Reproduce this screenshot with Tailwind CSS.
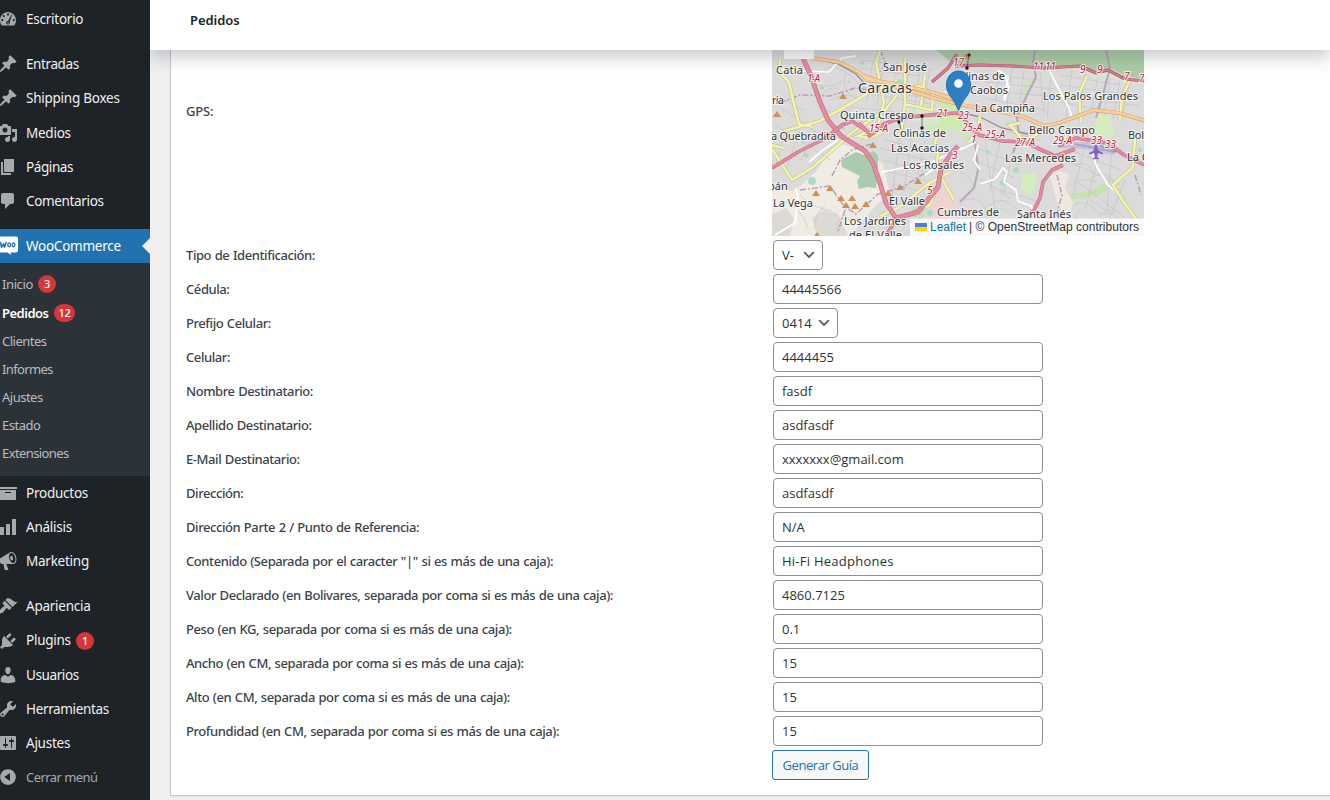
<!DOCTYPE html>
<html lang="es">
<head>
<meta charset="utf-8">
<title>Pedidos</title>
<script src="https://cdn.jsdelivr.net/npm/@tailwindcss/browser@4"></script>
</head>
<body class="w-[1330px] h-[800px] overflow-hidden bg-[#f0f0f1] font-['Noto_Sans','Open_Sans',sans-serif] text-[13px] text-[#3c434a] flex">

<aside class="relative z-20 w-[150px] h-[800px] shrink-0 bg-[#1d2327] text-[#f0f0f1] text-[13.5px] tracking-[-0.25px] pt-[2px] overflow-hidden" id="menu"></aside>

<div class="flex-1 min-w-0 h-[800px] flex flex-col">
  <header class="relative z-10 h-[50px] shrink-0 bg-white shadow-[0_8px_16px_0_rgba(85,93,102,0.3)] flex items-center px-10 pb-[9px]">
    <h1 class="text-[13px] leading-[19px] font-semibold text-[#1d2327] tracking-[-0.05px]">Pedidos</h1>
  </header>
  <main class="ml-5 h-[746px] shrink-0 bg-white border-l border-b border-[#c3c4c7] shadow-[0_1px_1px_rgba(0,0,0,0.04)] pl-[15px]">
    <div class="flex h-[188px]">
      <div class="w-[586px] pt-[52px] font-medium tracking-[-0.2px] leading-[18px]">GPS:</div>
      <svg class="block w-[372px] h-[186px]" viewBox="772 50 372 186" font-family="Noto Sans, sans-serif">
        <rect x="772" y="50" width="372" height="186" fill="#dcdbdb"/>
        <!-- hills and parks -->
        <path d="M772 188l20 3 10-6 14-14 15-22 10-5 26 8 16 12 7 30-15 12-18 22-12 12h-73z" fill="#f0ebe3"/>
        <path d="M772 214l14-6 8 10-4 18h-18zM812 218l12-8 14 4 10 22h-30z" fill="#dddad6"/>
        <path d="M841 160l15-8 8 3 9-4 5 4 0 17-2 16-9-1-8 2-2-8 3-5-18-9z" fill="#abcbb0"/>
        <path d="M936 50h208v29l-18-3-16-8-12 5-18-8-38 2-42-3-28 1-12-1-12-4z" fill="#abcba3"/>
        <path d="M1020 65l45 1 16 1 16 7 13-2 14 7 20 2v3l-21-1-14-8-14 3-16-8-58-1z" fill="#d9e8ce"/>
        <path d="M941 112l16-6 14 15-4 18-14-11-22 8-7-14z" fill="#cdebb0"/>
        <path d="M937 96l24 4 3 18-20-2z" fill="#cdebb0"/>
        <path d="M904 103l20 3 17 14-5 6-27-6z" fill="#d5e9d0"/>
        <path d="M1095 114l15 2 4 20-18 3z" fill="#d4edbd"/>
        <path d="M1021 175l13-3 3 10-7 14-8-6z" fill="#d4edbd"/>
        <path d="M1067 194l25-3 10-7 10 3-15 9-26 3z" fill="#c5e3ad"/>
        <path d="M934 190l12-1 8 8 8 18-14 15-28 5z" fill="#eed3d3"/>
        <path d="M1050 176l10-5 9 3-4 14 8 14-4 16-11-12z" fill="#efe7e2"/>
        <path d="M914 204l17-5-8 20-15 4z" fill="#c5dfc4"/>
        <path d="M1027 81l6-3-8 17 3 1-6 16 4-19-4 1z" fill="#c8e7ae"/>
        <!-- street mesh -->
        <g fill="none" stroke="#c4c3c5" stroke-width=".7">
          <path d="M862 60l70 10M860 68l60 8M862 87l70 12M866 93l70 12M850 107l90 10M873 60l-6 40M885 60l-8 45M897 62l-8 50M910 64l-8 48M920 70l-7 46M930 70l-8 40M990 75l50 5M985 82l70 7M980 90l90 8M985 98l60 12M1060 75l60 10M1060 85l80 12M1060 94l80 12M1060 102l60 12M1000 68l-5 38M1012 68l-6 45M1024 72l-6 42M1040 70l4 45M1052 68l-5 50M1072 68l-6 52M1086 70l-8 50M1098 76l-7 38M1110 78l-6 38M1120 80l-7 38M1130 82l-9 38"/>
          <path d="M885 140l60 15M880 148l60 16M883 160l50 14M888 172l45 10M892 184l30 8M900 136l-8 60M912 132l-8 60M925 140l-9 44M775 95l30 16M780 108l30 18M775 125l30 18M800 140l30 20M784 135l-8 30M800 130l-14 40M815 130l-14 30M1000 130l40 10M970 145l50 20M975 160l40 18M980 178l30 20M1000 190l40 12M985 140l10 70M1000 140l-10 50M1015 144l-12 50M1070 150l50 20M1065 160l55 25M1075 180l40 30M1085 145l-12 50M1100 150l-15 60M1112 150l-5 60M1125 180l-20 50M1090 200l40 25"/>
          <path d="M820 75q8-12 20-6t18 14M818 85q14 4 24-4M830 100q14-8 28-2M822 95q8-10 16-6M845 75q-4 14 8 22M826 110q10 6 26-2M780 200q20 4 28 28M800 195q10 12 32 16M825 205q-12 12-10 25M845 215q-10 6-8 18M965 200q18-6 22 16M990 205q14-12 28 6M1090 180q14-14 26 4M1100 215q14-12 26 4M1075 165q12-6 18 8M1080 210q-10 8 4 14M960 172q12 4 14 16"/>
        </g>
        <g fill="none" stroke="#bfdab2" stroke-width="1"><path d="M1074 205q12-6 20 4t24 2M1070 186q14-10 26-4M985 215q10-10 22-4M1112 185q12 4 14 18M1084 222q12-6 20 0"/></g>
        <g fill="#a9dcc0">
          <circle cx="822" cy="88" r="2"/><circle cx="806" cy="155" r="2.500"/><circle cx="812" cy="181" r="4"/><circle cx="862" cy="63" r="2"/><circle cx="843" cy="128" r="2"/><circle cx="1003" cy="183" r="3"/><circle cx="1016" cy="170" r="3"/><circle cx="900" cy="82" r="3"/><circle cx="930" cy="213" r="3"/><circle cx="1140" cy="150" r="2"/><circle cx="849" cy="82" r="1.500"/><circle cx="988" cy="152" r="2"/>
        </g>
        <path d="M1060 143l45-2 14 8-6 6-28-6-25-1z" fill="#c8c2d6"/>
        <path d="M1075 144l40 8" stroke="#a9a6c9" stroke-width="2"/>
        <!-- district limits -->
        <g fill="none" stroke="#a787ad" stroke-width="1.500" stroke-dasharray="6 2 2 2" opacity=".75">
          <path d="M780 103l20-8 30 1 25-8 20 3M832 176l8-16 12-10 20-6M800 190l30-4 14 20 12 8 22-20 25-7 22-14M845 210l-7 22M1057 175l5 20-6 22M880 50l6 14-10 12M1100 146l40 14M1135 175l6 20"/>
        </g>
        <path d="M1035 50l-2 12 3 15-10 20-9 20 2 20-6 16M1106 50l4 18-8 30-6 20M975 140l3 30-4 18-14 14" fill="none" stroke="#ab93b0" stroke-width="2" opacity=".75"/>
        <g fill="none" stroke="#92899b" stroke-width="1.300"><path d="M813 58l25 6 18 10 8 9M960 112l20 5 22 11 26 6"/></g>
        <!-- minor roads -->
        <g fill="none" stroke="#fff" stroke-width="1.700">
          <path d="M776 69l25 2 28 1 13-14 14-2M882 172l50-10 30-14M775 235l20-12 3-25-2-10M838 140l-15 10-14 12M1046 62l8 18 15 28 3 10M1005 75l4 12-5 14 4-24-10-7M980 184l15-5 8-11 4 4-3 10 12 8 2 11 13 5 3 6M1092 150l4 15 12 20 12 10M978 145l-4 15 6 10M960 150l16-8M945 92h20M925 175l30-20"/>
        </g>
        <!-- yellow roads -->
        <path d="M780 58l-1 14 10 10 4 18 6 24 14 3M772 149l20 31 20-12 24-21 15-14 34-23 12-15M880 50l-4 12 8 40-6 24-20 10 12 2 16-8M905 58l0 46-4 28M904 104l28 6 1-16-14-8-14 4M925 74l-4 32M784 131l36-10 30-17 25-15M940 130l-5 12 3 12-2 14 18 32M908 215l22-10 8-20M1081 122l-2-28 8-18M1130 80l-8 17-2 25M1020 123l-10 2 14 16 14-7 8-9M1070 127l-6 14M1143 133l-8 6-2 28-20 18 8 13 25 35M772 145l12 3M980 115l-2 16-10 12M880 216l18-8 30-24 22-12" fill="none" stroke="#bbb98e" stroke-width="3.600"/>
        <path d="M780 58l-1 14 10 10 4 18 6 24 14 3M772 149l20 31 20-12 24-21 15-14 34-23 12-15M880 50l-4 12 8 40-6 24-20 10 12 2 16-8M905 58l0 46-4 28M904 104l28 6 1-16-14-8-14 4M925 74l-4 32M784 131l36-10 30-17 25-15M940 130l-5 12 3 12-2 14 18 32M908 215l22-10 8-20M1081 122l-2-28 8-18M1130 80l-8 17-2 25M1020 123l-10 2 14 16 14-7 8-9M1070 127l-6 14M1143 133l-8 6-2 28-20 18 8 13 25 35M772 145l12 3M980 115l-2 16-10 12M880 216l18-8 30-24 22-12" fill="none" stroke="#f3f3a9" stroke-width="2.700"/>
        <!-- orange roads -->
        <path d="M811 58l28 4 20 10 8 8 30 4 38 9 25 8M862 75l35 12 40 12 25 6 40 7 22 5 20 9 15-3 35-13 25 3 27 8" fill="none" stroke="#cf9b63" stroke-width="3.800"/>
        <path d="M811 58l28 4 20 10 8 8 30 4 38 9 25 8M862 75l35 12 40 12 25 6 40 7 22 5 20 9 15-3 35-13 25 3 27 8" fill="none" stroke="#f8ce9b" stroke-width="2.800"/>
        <!-- main roads -->
        <g fill="none" stroke-linejoin="round">
          <path d="M802 56l9 20 9 26 8 18 13 16 24 15 8 12 7 20 6 20 10 15 22-6 20-25 3-18 9-14 8-9" stroke="#c06480" stroke-width="4.800"/>
          <path d="M802 56l9 20 9 26 8 18 13 16 24 15 8 12 7 20 6 20 10 15 22-6 20-25 3-18 9-14 8-9" stroke="#e28c9f" stroke-width="3.700"/>
          <path d="M772 168l26-16 28-14 16-13 10-4 18 12M859 123l10 10M868 137l16-13 16-6 40-4 19-1 8 10 12 12 24 6 22 1 12 6 18 8 20-7M1058 146l18-8 32 5 16 12 20 10M1063 165l-11 5-9 12-3 16-6 12-8 8M886 236l11-18" stroke="#c8607b" stroke-width="3.600"/>
          <path d="M772 168l26-16 28-14 16-13 10-4 18 12M859 123l10 10M868 137l16-13 16-6 40-4 19-1 8 10 12 12 24 6 22 1 12 6 18 8 20-7M1058 146l18-8 32 5 16 12 20 10M1063 165l-11 5-9 12-3 16-6 12-8 8M886 236l11-18" stroke="#e28c9f" stroke-width="2.600"/>
          <path d="M932 82l16-14 9-14M955 66l25-1 32 1 32 2 36-2 16 7 12-3 17 9 19 2" stroke="#aa5468" stroke-width="3.200"/>
          <path d="M932 82l16-14 9-14M955 66l25-1 32 1 32 2 36-2 16 7 12-3 17 9 19 2" stroke="#d97f90" stroke-width="1.800"/>
        </g>
        <!-- peaks -->
        <path fill="#d08f55" d="M843 93l4 6h-8zM777 111l4 6h-8zM873 142l4 6h-8zM966 53l4 6h-8zM816 190l4 6h-8zM830 185l4 6h-8zM841 195l4 6h-8zM852 195l4 6h-8zM846 202l4 6h-8zM855 203l4 6h-8zM866 201l4 6h-8zM888 190l4 6h-8zM900 184l4 6h-8zM918 178l4 6h-8zM817 232l4 6h-8z"/>
        <g fill="#111"><circle cx="899" cy="122" r="1.700"/><circle cx="922" cy="116" r="1.700"/><circle cx="922" cy="128" r="1.700"/><circle cx="967" cy="68" r="1.700"/><circle cx="969" cy="55" r="1.700"/><path d="M899 122l2 8M922 116v13M967 68l2-14" stroke="#333" stroke-width=".6"/></g>
        <path transform="translate(1096 152)" d="M-1-7h2l1 5 5 3v1.500l-5-1.500-1 4 2 1.500v1l-3-.5-3 .5v-1l2-1.500-1-4-5 1.500v-1.500l5-3z" fill="#8461c4"/>
        <!-- route numbers -->
        <g fill="#b3273f" stroke="#fff" stroke-opacity=".8" stroke-width="2" paint-order="stroke" font-size="10" font-style="italic" lengthAdjust="spacingAndGlyphs">
          <text x="807" y="82" textLength="13">1-A</text><text x="869" y="132" textLength="19">15-A</text><text x="937" y="117" textLength="11">21</text><text x="958" y="119" textLength="11">23</text><text x="962" y="131" textLength="20">25-A</text><text x="985" y="138" textLength="20">25-A</text><text x="953" y="66" textLength="11">17</text><text x="1033" y="70" textLength="11">11</text><text x="1045" y="70" textLength="11">11</text><text x="1080" y="73">9</text><text x="1097" y="73">9</text><text x="1124" y="80">7</text><text x="1139" y="82">7</text><text x="1015" y="146" textLength="20">27/A</text><text x="1053" y="144" textLength="19">29-A</text><text x="1091" y="144" textLength="11">33</text><text x="1105" y="148" textLength="11">33</text><text x="952" y="159">3</text><text x="927" y="194">5</text><text x="971" y="143">1</text>
        </g>
        <!-- place names -->
        <g fill="#333" stroke="#fff" stroke-opacity=".65" stroke-width="2.200" paint-order="stroke" font-size="11" lengthAdjust="spacingAndGlyphs">
          <text x="776" y="74" textLength="27">Catia</text>
          <text x="883" y="71" textLength="44">San José</text>
          <text x="858" y="93" textLength="54" font-size="14">Caracas</text>
          <text x="840" y="119" textLength="74">Quinta Crespo</text>
          <text x="893" y="137" textLength="53">Colinas de</text>
          <text x="891" y="152" textLength="58">Las Acacias</text>
          <text x="903" y="169" textLength="61">Los Rosales</text>
          <text x="771" y="139.500" textLength="65">a Quebradita</text>
          <text x="772" y="104" textLength="12">ria</text>
          <text x="768" y="190">bán</text>
          <text x="773" y="207" textLength="40">La Vega</text>
          <text x="889" y="205" textLength="36">El Valle</text>
          <text x="844" y="225" textLength="62">Los Jardines</text>
          <text x="849" y="239" textLength="53">de El Valle</text>
          <text x="937" y="216" textLength="62">Cumbres de</text>
          <text x="952" y="80" textLength="53">Colinas de</text>
          <text x="970" y="94" textLength="38">Caobos</text>
          <text x="975" y="112" textLength="60">La Campiña</text>
          <text x="1043" y="100" textLength="95">Los Palos Grandes</text>
          <text x="1029" y="134" textLength="66">Bello Campo</text>
          <text x="1128" y="139" textLength="16">Bol</text>
          <text x="1005" y="162" textLength="71">Las Mercedes</text>
          <text x="1127" y="161">La C</text>
          <text x="1017" y="218" textLength="54">Santa Inés</text>
        </g>
        <!-- location marker -->
        <path d="M958.500 110.500c-2.500-6-4.500-9.500-8.300-14.500-2.400-3.300-3.700-6.300-3.700-11 0-8 5-14 12-14s12 6 12 14c0 4.700-1.300 7.700-3.700 11-3.800 5-5.800 8.500-8.300 14.500z" fill="#2f7fc3" stroke="#2a6faa" stroke-width="1"/>
        <circle cx="958.500" cy="83.500" r="4.300" fill="#fff"/>
        <rect x="784" y="48" width="30" height="11" rx="2" fill="#fff"/>
        <rect x="910" y="218.500" width="234" height="17.500" fill="#fff" fill-opacity=".82"/>
        <rect x="915" y="223" width="12" height="4" fill="#4c7be1"/><rect x="915" y="227" width="12" height="4" fill="#ffd500"/>
        <g font-family="Liberation Sans" font-size="12">
          <text x="930" y="231" fill="#0078a8" textLength="36">Leaflet</text>
          <text x="969" y="231" fill="#333" textLength="170">| © OpenStreetMap contributors</text>
        </g>
      </svg>
    </div>
    <div id="fields"></div>
    <div class="flex h-[34px] pl-[586px] pt-[2px]">
      <button class="h-[30px] w-[97px] shrink-0 border border-[#2271b1] rounded-[3px] bg-[#f6f7f7] text-[#2271b1] text-[13px] tracking-[-0.45px] whitespace-nowrap pt-px font-['Open_Sans',sans-serif]">Generar Guía</button>
    </div>
  </main>
</div>

<script>
const icons = {
  dash: '<path fill-rule="evenodd" d="M3.800 16.500h12.400A7.900 7.900 0 0 0 18 11.300C18 6.600 14.400 3 10 3s-8 3.600-8 8.300c0 2 .7 3.800 1.800 5.200zM10 4.300a1 1 0 1 1 0 2.200 1 1 0 0 1 0-2.200zM5.800 6a1 1 0 1 1 0 2.200 1 1 0 0 1 0-2.200zM4.300 10a1 1 0 1 1 0 2.200 1 1 0 0 1 0-2.200zM15.700 10a1 1 0 1 1 0 2.200 1 1 0 0 1 0-2.200zM13.500 5.500l.6.300-2.400 7c.5 1.600-.3 2.700-1.700 2.700s-2.300-1.300-1.600-2.500c.4-.8 1-1 1.700-1.100zM10 13.200a.8.800 0 1 0 0 1.600.8.800 0 0 0 0-1.600z"/>',
  pin: '<path d="M10.440 3.020l1.820-1.820 6.360 6.350-1.830 1.820c-1.050-.68-2.480-.57-3.410.36l-.75.75c-.92.93-1.040 2.350-.35 3.410l-1.830 1.820-2.410-2.410-2.800 2.790c-.42.42-3.380 2.710-3.800 2.290s1.860-3.390 2.280-3.810l2.790-2.790L4.100 9.360l1.830-1.820c1.050.69 2.480.57 3.400-.36l.75-.75c.93-.92 1.050-2.350.36-3.410z"/>',
  media: '<path d="M13 11V4c0-.55-.45-1-1-1h-1.670L9 1H5L3.670 3H2c-.55 0-1 .45-1 1v7c0 .55.45 1 1 1h10c.55 0 1-.45 1-1zM7 4.500c1.380 0 2.500 1.120 2.500 2.500S8.380 9.500 7 9.500 4.500 8.380 4.500 7 5.620 4.500 7 4.500zM14 6h5v10.500c0 1.380-1.120 2.500-2.500 2.500S14 17.880 14 16.500s1.120-2.500 2.500-2.500c.17 0 .34.02.5.05V9h-3V6zm-4 8.050V13h2v3.500c0 1.380-1.120 2.500-2.500 2.500S7 17.880 7 16.500 8.120 14 9.500 14c.17 0 .34.02.5.05z" fill-rule="evenodd"/>',
  page: '<path d="M6 15V2h10v13H6zm-1 1h8v2H3V5h2v11z"/>',
  comment: '<path d="M5 2h9c1.100 0 2 .9 2 2v7c0 1.100-.9 2-2 2h-2l-5 5v-5H5c-1.100 0-2-.9-2-2V4c0-1.100.9-2 2-2z"/>',
  woo: '<path fill="#fff" d="M0 2.500Q0 .5 2 .5h16q2 0 2 2v12q0 2-2 2h-5.500l.8 2.500-4-2.500H2q-2 0-2-2z"/><path fill="none" stroke="#2271b1" stroke-width="1.500" stroke-linejoin="round" stroke-linecap="round" d="M2.500 6.500l1 4.800 2-3.500 1 3.500 1.600-4.800"/><ellipse cx="11.200" cy="8.800" rx="1.400" ry="2" fill="none" stroke="#2271b1" stroke-width="1.300"/><ellipse cx="15.500" cy="8.800" rx="1.400" ry="2" fill="none" stroke="#2271b1" stroke-width="1.300"/>',
  archive: '<path fill-rule="evenodd" d="M19 4v2H1V4h18zM2 7h16v10H2V7zm11 3V9H7v1h6z"/>',
  chart: '<path d="M18 18V2h-4v16h4zm-6 0V7H8v11h4zm-6 0v-8H2v8h4z"/>',
  mega: '<path fill-rule="evenodd" d="M18.150 5.940c.46 1.620.38 3.220-.02 4.480-.42 1.280-1.260 2.180-2.300 2.480-.16.06-.26.06-.4.06-.06.02-.12.02-.18.02-.06.02-.14.02-.22.02h-6.800l2.220 5.500c.02.14-.06.26-.14.34-.08.1-.24.16-.34.16H6.950c-.1 0-.26-.06-.34-.16-.08-.08-.16-.2-.14-.34l-1-5.500H4.250l-.02-.02c-.5.06-1.080-.18-1.540-.62s-.88-1.080-1.060-1.880c-.24-.8-.2-1.560-.02-2.200.18-.62.58-1.080 1.060-1.300l.02-.02 9-5.400c.1-.06.18-.1.24-.16.06-.04.14-.08.24-.12.16-.08.28-.12.5-.18 1.040-.3 2.240.1 3.220.98s1.840 2.240 2.260 3.860zm-2.580 5.980h-.02c.4-.1.74-.34 1.040-.7.58-.7.86-1.760.86-3.040 0-.64-.1-1.300-.28-1.980-.34-1.360-1.020-2.500-1.780-3.240s-1.680-1.100-2.460-.88c-.82.22-1.400.96-1.700 2-.32 1.040-.28 2.360.06 3.720.38 1.360 1 2.500 1.800 3.240.78.74 1.620 1.100 2.480.88zm-2.540-7.080c.22-.04.42-.02.62.04.38.16.76.48 1.020 1s.42 1.200.42 1.780c0 .3-.04.56-.12.8-.18.48-.44.84-.86.94-.34.1-.8-.06-1.140-.4s-.64-.86-.78-1.500c-.18-.62-.12-1.240.02-1.720s.48-.84.82-.94z"/>',
  brush: '<path d="M14.480 11.060L7.410 3.990l1.500-1.500c.5-.56 2.300-.47 3.510.32 1.210.8 1.430 1.280 2.910 2.100 1.180.64 2.450 1.260 4.450.85zm-.71.71L6.700 4.700 4.930 6.470c-.39.39-.39 1.020 0 1.410l1.060 1.060c.39.39.39 1.030 0 1.420-.6.6-1.430 1.110-2.210 1.690-.35.26-.7.53-1.010.84C1.430 14.230.4 16.080 1.400 17.070c.99 1 2.840-.03 4.180-1.360.31-.31.58-.66.85-1.020.57-.78 1.080-1.610 1.690-2.210.39-.39 1.020-.39 1.410 0l1.060 1.060c.39.39 1.020.39 1.410 0z"/>',
  plug: '<path d="M13.110 4.360L9.870 7.600 8 5.730l3.240-3.240c.35-.34 1.050-.2 1.560.32.52.51.66 1.210.31 1.550zm-8 1.770l.91-1.120 9.010 9.010-1.190.84c-.71.71-2.630 1.160-3.820 1.160H6.140L4.900 17.260c-.59.59-1.540.59-2.120 0-.59-.58-.59-1.530 0-2.120l1.240-1.240v-3.880c0-1.130.4-3.190 1.090-3.890zm7.260 3.970l3.240-3.240c.34-.35 1.040-.21 1.550.31.52.51.66 1.210.31 1.550l-3.240 3.250z"/>',
  user: '<path d="M10 9.250c-2.270 0-2.730-3.440-2.730-3.440C7 4.020 7.820 2 9.970 2c2.160 0 2.980 2.020 2.710 3.810 0 0-.41 3.440-2.680 3.440zm0 2.570L12.720 10c2.390 0 4.520 2.330 4.520 4.530v2.490s-3.650 1.130-7.240 1.130c-3.650 0-7.240-1.130-7.240-1.130v-2.490c0-2.250 1.940-4.480 4.470-4.480z"/>',
  tool: '<path fill-rule="evenodd" d="M16.680 9.770c-1.340 1.340-3.300 1.670-4.950.99l-5.410 6.520c-.99.99-2.590.99-3.580 0s-.99-2.590 0-3.570l6.520-5.420c-.68-1.650-.35-3.610.99-4.950 1.280-1.280 3.120-1.620 4.720-1.060l-2.890 2.890 2.820 2.820 2.860-2.870c.53 1.580.18 3.390-1.080 4.650zM3.810 16.210c.4.39 1.040.39 1.430 0 .4-.4.4-1.040 0-1.430-.39-.4-1.030-.4-1.430 0-.39.39-.39 1.030 0 1.430z"/>',
  settings: '<path fill-rule="evenodd" d="M18 16V4c0-.55-.45-1-1-1H3c-.55 0-1 .45-1 1v12c0 .55.45 1 1 1h14c.55 0 1-.45 1-1zM8 11h1c.55 0 1 .45 1 1s-.45 1-1 1H8v1.500c0 .28-.22.5-.5.5s-.5-.22-.5-.5V13H6c-.55 0-1-.45-1-1s.45-1 1-1h1V5.500c0-.28.22-.5.5-.5s.5.22.5.5V11zm5-2h-1c-.55 0-1-.45-1-1s.45-1 1-1h1V5.500c0-.28.22-.5.5-.5s.5.22.5.5V7h1c.55 0 1 .45 1 1s-.45 1-1 1h-1v5.500c0 .28-.22.5-.5.5s-.5-.22-.5-.5V9z"/>',
  collapse: '<path fill-rule="evenodd" d="M10 2.160c4.330 0 7.840 3.510 7.840 7.840s-3.510 7.840-7.840 7.840S2.160 14.330 2.160 10 5.710 2.160 10 2.160zm2 11.720V6.120L6.180 9.970z"/>'
};
const badge = n => n ? `<span class="ml-[5px] h-[18px] min-w-[18px] px-[5px] rounded-full bg-[#d63638] text-white text-[11px] font-medium tracking-[-0.4px] leading-[18px] text-center">${n}</span>` : '';
const item = ([icon, label, n, cls]) => `<div class="flex items-center h-[34.2px] ${cls || ''}"><svg class="-ml-[2px] mr-2 w-5 h-5 shrink-0 fill-[#a7aaad]" viewBox="0 0 20 20">${icons[icon]}</svg><span>${label}</span>${badge(n)}</div>`;
const sub = ([label, n, cls]) => `<div class="flex items-center pl-[2px] text-[13px] ${cls || 'h-7'}"><span>${label}</span>${badge(n)}</div>`;
document.getElementById('menu').innerHTML =
  item(['dash', 'Escritorio', '', 'mb-[11px]']) +
  [['pin', 'Entradas', '', 'tracking-[-0.4px]'], ['pin', 'Shipping Boxes'], ['media', 'Medios'], ['page', 'Páginas', '', 'tracking-[-0.4px]'], ['comment', 'Comentarios', '', 'tracking-[-0.35px] mb-[10.600px]']].map(item).join('') +
  `<div class="relative">${item(['woo', 'WooCommerce', '', 'bg-[#2271b1] text-white'])}<span class="absolute right-0 top-[9px] border-y-8 border-r-8 border-y-transparent border-r-[#f0f0f1]"></span></div>` +
  `<div class="bg-[#2c3338] text-[#b8bcc0] pt-[7px] pb-2 h-[212.800px] tracking-[-0.5px]">` +
  [['Inicio', 3, 'h-[29px] tracking-[-0.4px]'], ['Pedidos', 12, 'h-[29px] font-semibold text-white'], ['Clientes'], ['Informes', '', 'h-7 tracking-[-0.65px]'], ['Ajustes'], ['Estado'], ['Extensiones', '', 'h-7 tracking-[-0.6px]']].map(sub).join('') + `</div>` +
  [['archive', 'Productos'], ['chart', 'Análisis'], ['mega', 'Marketing', '', 'mb-[11px]'], ['brush', 'Apariencia'], ['plug', 'Plugins', 1], ['user', 'Usuarios', '', 'tracking-[-0.4px]'], ['tool', 'Herramientas', '', 'tracking-[-0.35px]'], ['settings', 'Ajustes'], ['collapse', 'Cerrar menú', '', 'text-[#a7aaad] text-[13px] tracking-[-0.55px] word-spacing-normal']].map(item).join('');

const rows = [
  ['Tipo de Identificación:', 'V-', 'w-[50px]'], ['Cédula:', '44445566'], ['Prefijo Celular:', '0414', 'w-[65px]'], ['Celular:', '4444455'],
  ['Nombre Destinatario:', 'fasdf'], ['Apellido Destinatario:', 'asdfasdf'], ['E-Mail Destinatario:', 'xxxxxxx@gmail.com'], ['Dirección:', 'asdfasdf'],
  ['Dirección Parte 2 / Punto de Referencia:', 'N/A'], ['Contenido (Separada por el caracter "|" si es más de una caja):', 'Hi-Fi Headphones'],
  ['Valor Declarado (en Bolivares, separada por coma si es más de una caja):', '4860.7125'], ['Peso (en KG, separada por coma si es más de una caja):', '0.1'],
  ['Ancho (en CM, separada por coma si es más de una caja):', '15'], ['Alto (en CM, separada por coma si es más de una caja):', '15'],
  ['Profundidad (en CM, separada por coma si es más de una caja):', '15']
];
document.getElementById('fields').innerHTML = rows.map(([label, value, select]) =>
  `<div class="flex items-center h-[34px]"><div class="w-[587px] pt-[2px] font-medium tracking-[-0.42px] [word-spacing:0.6px] whitespace-nowrap">${label}</div>` +
  `<div class="flex items-center justify-between h-[30px] ${select || 'w-[270px]'} border border-[#8c8f94] rounded-[4px] bg-white pl-2 pr-[5px] text-[#2c3338] font-['Open_Sans',sans-serif] text-[13px]"><span class="pt-px ${value.startsWith('Hi') ? 'tracking-[0.25px]' : ''}">${value}</span>` +
  (select ? '<svg class="w-4 h-4" viewBox="0 0 20 20"><path d="M5 6l5 5 5-5 2 1-7 7-7-7z" fill="#555"/></svg>' : '') + `</div></div>`).join('');
</script>
</body>
</html>
